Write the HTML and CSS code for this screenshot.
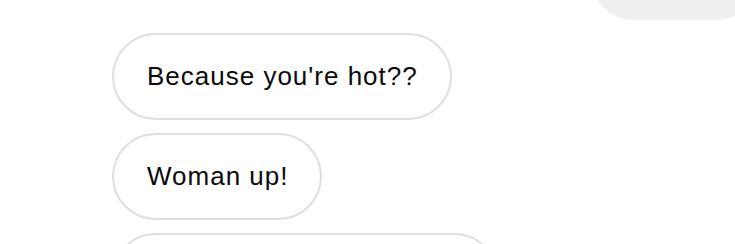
FILE: index.html
```html
<!DOCTYPE html>
<html>
<head>
<meta charset="utf-8">
<link rel="stylesheet" href="styles.css">
</head>
<body>
<div class="thread">
  <div class="bubble bubble-own"></div>
  <div class="bubble bubble-reply">Because you're hot??</div>
  <div class="bubble bubble-reply">Woman up!</div>
  <div class="bubble bubble-reply bubble-cut"></div>
</div>
</body>
</html>
```
FILE: styles.css
```css
html, body {
  margin: 0;
  padding: 0;
  background: #ffffff;
  overflow: hidden;
}
body {
  width: 735px;
  height: 244px;
}
.thread {
  display: flex;
  flex-direction: column;
  align-items: flex-start;
  gap: 13px;
  padding-left: 112px;
  margin-top: -67px;
}
.bubble {
  box-sizing: border-box;
  height: 87px;
  border-radius: 44px;
  display: flex;
  align-items: center;
  padding: 0 32px 0 33px;
  font-family: "Liberation Sans", Arial, sans-serif;
  font-size: 26px;
  letter-spacing: 1px;
  color: #0a0a0a;
  white-space: pre;
}
.bubble-own {
  align-self: flex-end;
  width: 170px;
  margin-right: -25px;
  background: #efefef;
}
.bubble-reply {
  border: 2px solid #dfdfdf;
  background: #ffffff;
}
.bubble-cut {
  width: 386px;
}
```
